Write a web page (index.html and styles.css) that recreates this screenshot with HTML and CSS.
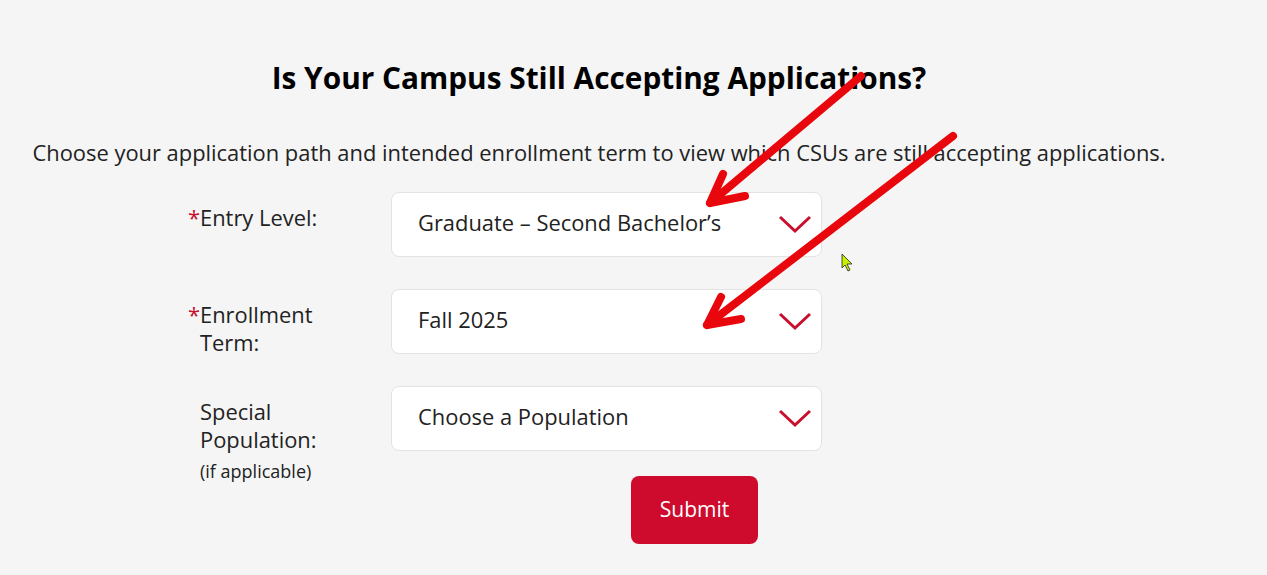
FILE: index.html
```html
<!DOCTYPE html>
<html lang="en">
<head>
  <meta charset="UTF-8">
  <meta name="viewport" content="width=device-width, initial-scale=1.0">
  <title>Is Your Campus Still Accepting Applications?</title>
  <link rel="stylesheet" href="styles.css">
</head>
<body>
  <div id="page">
    <h2 class="title">Is Your Campus Still Accepting Applications?</h2>
    <p class="intro">Choose your application path and intended enrollment term to view which CSUs are still accepting applications.</p>

    <form class="finder">
      <div class="row">
        <label class="label" for="entry"><span class="req">*</span>Entry Level:</label>
        <div class="select-wrap">
          <select id="entry" class="select">
            <option>Graduate – Second Bachelor’s</option>
          </select>
          <svg class="chevron" width="34" height="20" viewBox="0 0 34 20"><polyline points="2,3 17,17 32,3" fill="none" stroke="#c8102e" stroke-width="3"/></svg>
        </div>
      </div>

      <div class="row">
        <label class="label" for="term"><span class="req">*</span>Enrollment<br>Term:</label>
        <div class="select-wrap">
          <select id="term" class="select">
            <option>Fall 2025</option>
          </select>
          <svg class="chevron" width="34" height="20" viewBox="0 0 34 20"><polyline points="2,3 17,17 32,3" fill="none" stroke="#c8102e" stroke-width="3"/></svg>
        </div>
      </div>

      <div class="row">
        <label class="label" for="pop">Special<br>Population:<small class="hint">(if applicable)</small></label>
        <div class="select-wrap">
          <select id="pop" class="select">
            <option>Choose a Population</option>
          </select>
          <svg class="chevron" width="34" height="20" viewBox="0 0 34 20"><polyline points="2,3 17,17 32,3" fill="none" stroke="#c8102e" stroke-width="3"/></svg>
        </div>
      </div>

      <div class="actions">
        <button type="button" class="submit">Submit</button>
      </div>
    </form>
  </div>

  <!-- annotation drawn over the screenshot -->
  <svg class="marks" width="1267" height="575" viewBox="0 0 1267 575">
    <g fill="none" stroke="#e8070c" stroke-width="8" stroke-linecap="round" stroke-linejoin="round">
      <line x1="861" y1="76" x2="710" y2="203"/>
      <polyline points="723,174 710,203 745,196"/>
      <line x1="953" y1="136" x2="707" y2="325"/>
      <polyline points="721,297 707,325 741,319"/>
    </g>
    <polygon points="842,254 842,268 845,265 848,271 850,270 847,264 852,264" fill="#c6f000" stroke="#222" stroke-width="0.8"/>
  </svg>
</body>
</html>
```

FILE: styles.css
```css
body, html {
  margin: 0;
  padding: 0;
  width: 100%;
  height: 100%;
  overflow: hidden;
  background: #f5f5f5;
  position: relative;
}
body {
  font-family: "Open Sans", "Noto Sans", sans-serif;
  color: #222;
}
#page {
  width: 1198px;
  padding-top: 59px;
}
.title {
  margin: 0;
  text-align: center;
  font-size: 29.8px;
  font-weight: 700;
  line-height: 38px;
  color: #000;
}
.intro {
  margin: 42px 0 0;
  text-align: center;
  font-size: 21.9px;
  line-height: 28px;
}
.finder {
  margin: 25px 0 0 188px;
  display: flex;
  flex-direction: column;
  gap: 32px;
}
.row {
  display: flex;
  align-items: flex-start;
  height: 65px;
}
.label {
  width: 191px;
  padding: 12px 0 0 12px;
  font-size: 21.9px;
  line-height: 28px;
}
.req {
  color: #c8102e;
  margin-left: -12px;
  display: inline-block;
  width: 12px;
}
.hint {
  display: block;
  font-size: 18px;
  line-height: 24px;
  margin-top: 5px;
}
.select-wrap {
  position: relative;
  width: 431px;
}
.select {
  appearance: none;
  -webkit-appearance: none;
  width: 100%;
  height: 65px;
  box-sizing: border-box;
  padding: 0 60px 5px 26px;
  border: 1px solid #e3e3e3;
  border-radius: 8px;
  background: #fff;
  font-family: "Open Sans", "Noto Sans", sans-serif;
  font-size: 21.9px;
  color: #222;
}
.chevron {
  position: absolute;
  right: 10px;
  top: 22px;
  pointer-events: none;
}
.actions {
  margin: -7px 0 0 443px;
}
.submit {
  width: 127px;
  height: 68px;
  padding: 0 0 3px;
  border: none;
  border-radius: 8px;
  background: #ce0b2d;
  color: #fff;
  font-family: "Open Sans", "Noto Sans", sans-serif;
  font-size: 21px;
}
.marks {
  position: absolute;
  top: 0;
  left: 0;
  pointer-events: none;
}
```
